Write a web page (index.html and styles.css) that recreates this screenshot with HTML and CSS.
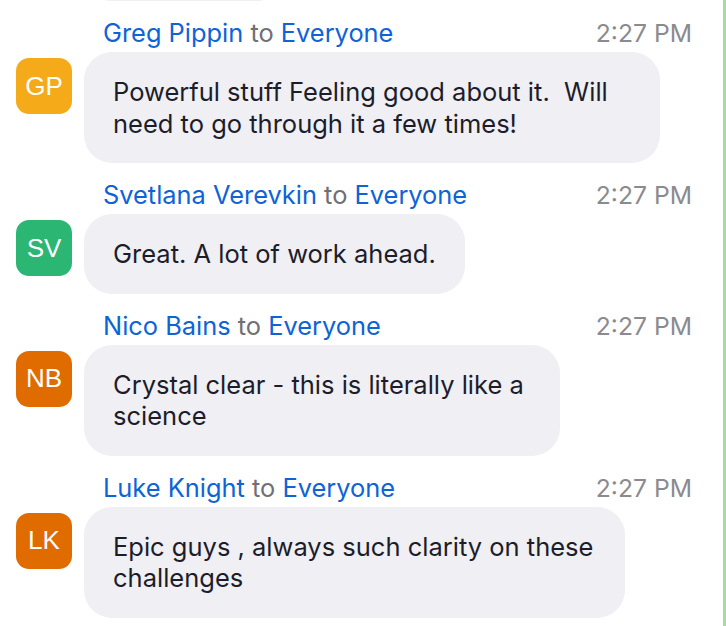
FILE: index.html
```html
<!DOCTYPE html>
<html lang="en">
<head>
  <meta charset="UTF-8">
  <meta name="viewport" content="width=device-width, initial-scale=1.0">
  <title>Chat</title>
  <link rel="stylesheet" href="styles.css">
</head>
<body>
  <div class="chat">
    <!-- tail of the previous message -->
    <div class="msg msg-prev">
      <div class="msg-body">
        <div class="avatar-space"></div>
        <div class="bubble bubble-prev"></div>
      </div>
    </div>

    <div class="msg">
      <div class="msg-head">
        <div class="who"><span class="sender">Greg Pippin</span> <span class="to">to</span> <span class="sender">Everyone</span></div>
        <span class="time">2:27 PM</span>
      </div>
      <div class="msg-body">
        <div class="avatar gp">GP</div>
        <div class="bubble bubble-greg">Powerful stuff Feeling good about it.&nbsp; Will<br>need to go through it a few times!</div>
      </div>
    </div>

    <div class="msg">
      <div class="msg-head">
        <div class="who"><span class="sender">Svetlana Verevkin</span> <span class="to">to</span> <span class="sender">Everyone</span></div>
        <span class="time">2:27 PM</span>
      </div>
      <div class="msg-body">
        <div class="avatar sv">SV</div>
        <div class="bubble">Great. A lot of work ahead.</div>
      </div>
    </div>

    <div class="msg">
      <div class="msg-head">
        <div class="who"><span class="sender">Nico Bains</span> <span class="to">to</span> <span class="sender">Everyone</span></div>
        <span class="time">2:27 PM</span>
      </div>
      <div class="msg-body">
        <div class="avatar nb">NB</div>
        <div class="bubble bubble-nico">Crystal clear - this is literally like a<br>science</div>
      </div>
    </div>

    <div class="msg">
      <div class="msg-head">
        <div class="who"><span class="sender">Luke Knight</span> <span class="to">to</span> <span class="sender">Everyone</span></div>
        <span class="time">2:27 PM</span>
      </div>
      <div class="msg-body">
        <div class="avatar lk">LK</div>
        <div class="bubble bubble-luke">Epic guys , always such clarity on these<br>challenges</div>
      </div>
    </div>
  </div>
</body>
</html>
```

FILE: styles.css
```css
body {
  margin: 0;
  height: 100vh;
  box-sizing: border-box;
  background: #ffffff;
  border-right: 3px solid #a8d9a0;
  font-family: 'Inter', 'Liberation Sans', sans-serif;
  overflow: hidden;
}

.chat {
  display: flex;
  flex-direction: column;
  gap: 19px;
  margin-top: -79px;
  padding: 0 31px 0 16px;
}

.msg-head {
  display: flex;
  justify-content: space-between;
  align-items: center;
  padding-left: 87px;
  margin-bottom: 6px;
  font-size: 25.4px;
  line-height: 26px;
}

.sender {
  color: #0e63d6;
}

.to {
  color: #6f6f75;
}

.time {
  color: #8b8b8f;
  font-size: 24.7px;
}

.msg-body {
  display: flex;
  align-items: flex-start;
  gap: 12px;
}

.avatar, .avatar-space {
  flex: 0 0 56px;
  width: 56px;
  height: 56px;
}

.avatar {
  margin-top: 6px;
  border-radius: 13px;
  color: #ffffff;
  font-family: 'Liberation Sans', sans-serif;
  font-size: 26px;
  display: flex;
  align-items: center;
  justify-content: center;
}

.avatar.gp {
  background-color: #f5aa1a;
}

.avatar.sv {
  background-color: #2bb673;
}

.avatar.nb, .avatar.lk {
  background-color: #e06c00;
}

.bubble {
  width: fit-content;
  box-sizing: border-box;
  padding: 24px 29px;
  background-color: #efeff4;
  border-radius: 28px;
  color: #1d1d2a;
  font-size: 25.5px;
  line-height: 31.5px;
  white-space: nowrap;
}

.bubble-prev {
  width: 201px;
  height: 80px;
  padding: 0;
}

.bubble-greg {
  width: 576px;
}

.bubble-nico {
  width: 476px;
}

.bubble-luke {
  width: 541px;
}
```
